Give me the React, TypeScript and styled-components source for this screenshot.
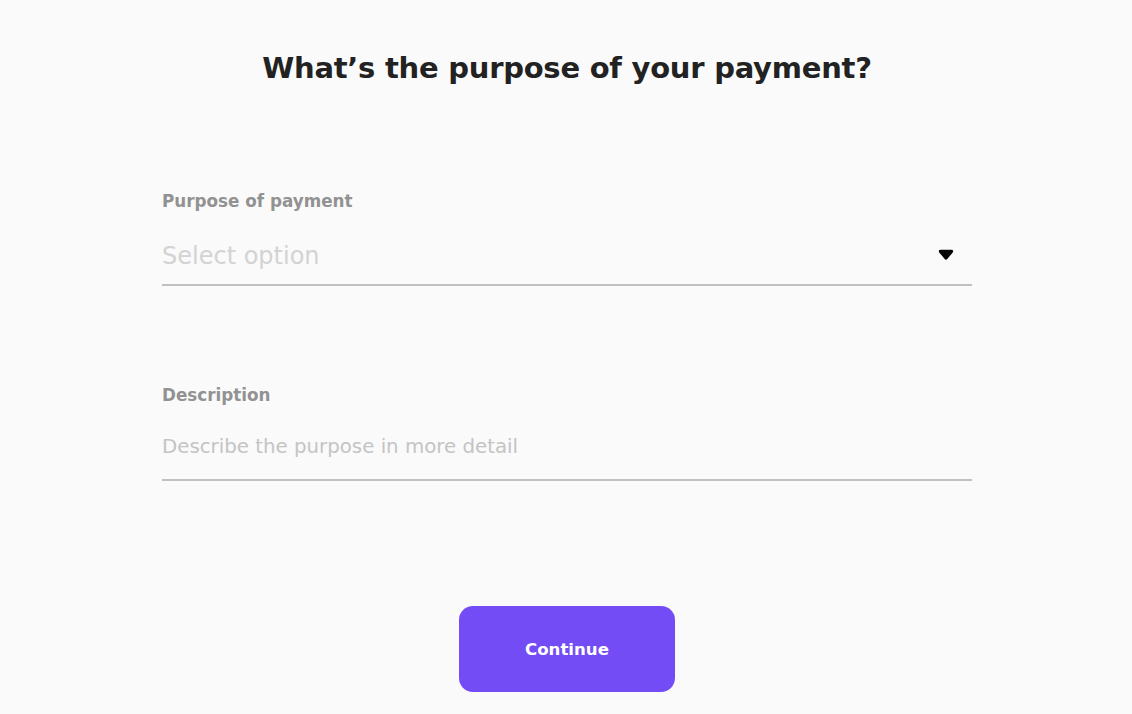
import styled, { createGlobalStyle } from 'styled-components'

const GlobalStyle = createGlobalStyle`
  html, body {
    margin: 0;
    padding: 0;
    background: #fafafa;
  }
  * {
    box-sizing: border-box;
  }
`

const FONT = `'DejaVu Sans', 'Liberation Sans', sans-serif`

const Page = styled.div`
  min-height: 100vh;
  padding-left: 2px;
  background: #fafafa;
  display: flex;
  flex-direction: column;
  align-items: center;
  font-family: ${FONT};
`

const Title = styled.h1`
  margin: 48px 0 0;
  font-size: 29px;
  line-height: 40px;
  font-weight: 700;
  color: #222222;
  letter-spacing: -0.25px;
`

const Form = styled.form`
  width: 810px;
  margin-top: 101px;
  display: flex;
  flex-direction: column;
`

const Field = styled.div<{ $gap?: number }>`
  display: flex;
  flex-direction: column;
  margin-top: ${({ $gap }) => $gap ?? 0}px;
`

const Label = styled.label`
  font-size: 16.8px;
  line-height: 24px;
  font-weight: 700;
  color: #929292;
`

const SelectRow = styled.div`
  margin-top: 13px;
  height: 60px;
  padding-top: 2px;
  display: flex;
  align-items: center;
  justify-content: space-between;
  border-bottom: 2px solid #c0c0c0;
  cursor: pointer;
`

const Placeholder = styled.span`
  font-size: 24px;
  color: #d3d3d3;
`

const Caret = styled.svg`
  width: 16px;
  height: 12px;
  margin-right: 18px;
  margin-bottom: 2px;
`

const InputRow = styled.div`
  margin-top: 10px;
  height: 64px;
  padding-bottom: 4px;
  display: flex;
  align-items: center;
  border-bottom: 2px solid #c0c0c0;
`

const TextInput = styled.input`
  width: 100%;
  border: none;
  outline: none;
  background: transparent;
  padding: 0;
  font-family: ${FONT};
  font-size: 19.8px;
  color: #333;

  &::placeholder {
    color: #c4c4c4;
  }
`

const ContinueButton = styled.button`
  margin-top: 125px;
  width: 216px;
  height: 86px;
  border: none;
  border-radius: 14px;
  background: #744cf6;
  color: #ffffff;
  font-family: ${FONT};
  font-size: 16.6px;
  font-weight: 700;
  cursor: pointer;
`

const App = () => {
  return (
    <Page>
      <GlobalStyle />
      <Title>What’s the purpose of your payment?</Title>
      <Form onSubmit={(e) => e.preventDefault()}>
        <Field>
          <Label>Purpose of payment</Label>
          <SelectRow>
            <Placeholder>Select option</Placeholder>
            <Caret viewBox="0 0 16 12">
              <path d="M3 0.8 H13 Q16.2 0.8 14.8 3.4 L9.3 10 Q8 11.6 6.7 10 L1.2 3.4 Q-0.2 0.8 3 0.8 Z" fill="#000" />
            </Caret>
          </SelectRow>
        </Field>
        <Field $gap={97}>
          <Label>Description</Label>
          <InputRow>
            <TextInput placeholder="Describe the purpose in more detail" />
          </InputRow>
        </Field>
      </Form>
      <ContinueButton type="button">Continue</ContinueButton>
    </Page>
  )
}

export default App
